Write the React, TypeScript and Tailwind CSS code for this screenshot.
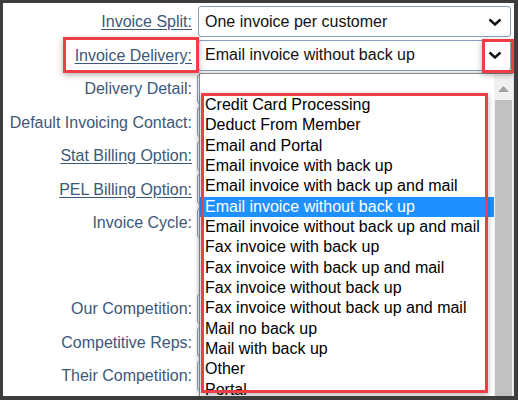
import React from 'react';

// Small bold chevron used by the native-looking selects
const Chevron = () => (
  <svg width="14" height="8" viewBox="0 0 14 8" className="shrink-0">
    <path d="M1.5 1.5 L7 6.5 L12.5 1.5" fill="none" stroke="#111" strokeWidth="2.4" />
  </svg>
);

const Select = ({ value }: { value: string }) => (
  <div className="ml-[6px] flex h-[31px] w-[313px] items-center justify-between rounded-[3px] border border-[#86a0bd] bg-white pl-[6px] pr-[8px] text-[16px] text-[#111]">
    <span>{value}</span>
    <Chevron />
  </div>
);

const Row = ({ label, link, height = 'h-[33.5px]', select }: RowProps) => (
  <div className={`flex items-start ${height}`}>
    <div className="w-[189px] text-right text-[16px] leading-[33.5px] text-[#3c5879] whitespace-nowrap">
      <span className={link ? 'underline underline-offset-[2px]' : ''}>{label}</span>
    </div>
    <div className="flex h-[33.5px] items-center">
      {select ? <Select value={select} /> : <div className="ml-[5px] h-[30px] w-[313px] rounded-[3px] border border-[#86a0bd] bg-white" />}
    </div>
  </div>
);

const options = [
  '',
  'Credit Card Processing',
  'Deduct From Member',
  'Email and Portal',
  'Email invoice with back up',
  'Email invoice with back up and mail',
  'Email invoice without back up',
  'Email invoice without back up and mail',
  'Fax invoice with back up',
  'Fax invoice with back up and mail',
  'Fax invoice without back up',
  'Fax invoice without back up and mail',
  'Mail no back up',
  'Mail with back up',
  'Other',
  'Portal',
];

const ListBox = ({ selected }: { selected: string }) => (
  <div className="absolute left-[196px] top-[70px] bottom-0 flex w-[314px] border-l border-t border-[#8a8a8a] bg-white shadow-[0_0_5px_rgba(0,0,0,0.25)]">
    <div className="flex-1 overflow-hidden">
      {options.map((o, i) => (
        <div
          key={i}
          className={`${i === 0 ? 'h-[21px]' : 'h-[20.33px]'} pl-[5px] text-[16px] leading-[20.33px] whitespace-nowrap ${o === selected ? 'bg-[#1e90ff] text-white' : 'text-black'}`}
        >
          {o}
        </div>
      ))}
    </div>
    <div className="flex w-[19px] flex-col bg-[#f1f1f1] px-px">
      <div className="flex h-[26px] items-end justify-center pb-[8px]">
        <svg width="11" height="6" viewBox="0 0 11 6"><path d="M0 6 L5.5 0 L11 6 Z" fill="#a3a3a3" /></svg>
      </div>
      <div className="flex-1 bg-[#c1c1c1]" />
    </div>
  </div>
);

// Red annotation boxes drawn over the screenshot
const Callout = ({ className }: { className: string }) => (
  <div className={`absolute border-[3px] border-[#f03e47] shadow-[0_2px_6px_rgba(0,0,0,0.3)] ${className}`} />
);

export default function App() {
  return (
    <div className="relative h-[400px] w-[518px] overflow-hidden border-l-[3px] border-t-[3px] border-r-4 border-b-4 border-[#3d3d3d] bg-white font-['Liberation_Sans',Arial,sans-serif]">
      <div className="pt-[2px]">
        <Row label="Invoice Split:" link select="One invoice per customer" />
        <Row label="Invoice Delivery:" link select="Email invoice without back up" />
        <Row label="Delivery Detail:" />
        <Row label="Default Invoicing Contact:" />
        <Row label="Stat Billing Option:" link />
        <Row label="PEL Billing Option:" link />
        <Row label="Invoice Cycle:" height="h-[86px]" />
        <Row label="Our Competition:" />
        <Row label="Competitive Reps:" />
        <Row label="Their Competition:" />
      </div>

      <ListBox selected="Email invoice without back up" />

      <Callout className="left-[60px] top-[34px] h-[36px] w-[136px]" />
      <Callout className="left-[479px] top-[36px] h-[34px] w-[32px]" />
      <Callout className="left-[198px] top-[90px] h-[300px] w-[287px]" />
    </div>
  );
}

// --- Interfaces ---
interface RowProps { label: string; link?: boolean; height?: string; select?: string; }
